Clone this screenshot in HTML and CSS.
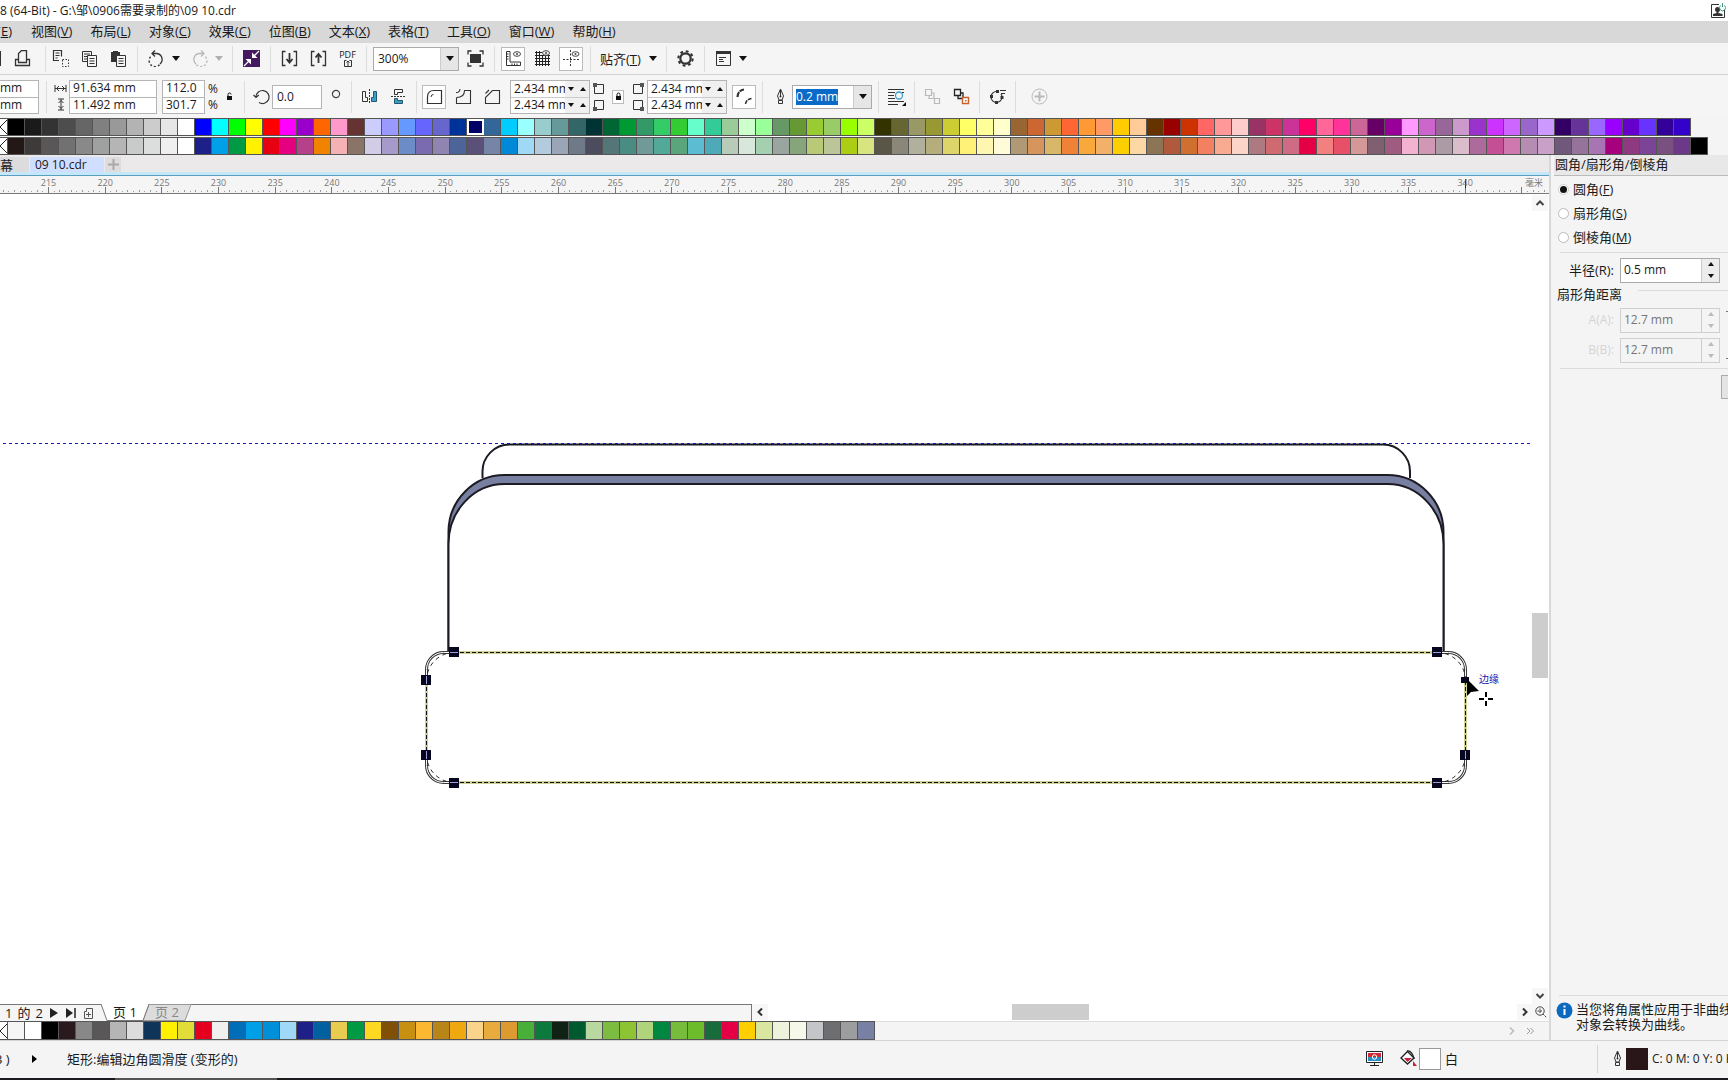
FILE: index.html
```html
<!DOCTYPE html>
<html lang="zh-CN">
<head>
<meta charset="utf-8">
<title>09 10.cdr</title>
<link rel="stylesheet" href="styles.css">
</head>
<body>
<div class="app">
  <header class="titlebar">
    <span>8 (64-Bit) - G:\邹\0906需要录制的\09 10.cdr</span>
    <button class="account" aria-label="账户"><svg width="16" height="16" viewBox="0 0 16 16"><path d="M9 1.500H1.500V14.500H14.500V7" fill="none" stroke="#333"/><circle cx="7.500" cy="6.500" r="2.500" fill="#333"/><path d="M6.500 8h2v2l4 1v2H3v-2l3.500-1z" fill="#333"/><path d="M10.500 2.500a3 3 0 1 0 4 0M12.500 0v4" fill="none" stroke="#3a9a78"/></svg></button>
  </header>
  <nav class="menubar">
    <button class="cut-menu">(<u>E</u>)</button><button>视图(<u>V</u>)</button><button>布局(<u>L</u>)</button><button>对象(<u>C</u>)</button><button>效果(<u>C</u>)</button><button>位图(<u>B</u>)</button><button>文本(<u>X</u>)</button><button>表格(<u>T</u>)</button><button>工具(<u>O</u>)</button><button>窗口(<u>W</u>)</button><button>帮助(<u>H</u>)</button>
  </nav>

  <div class="toolbar">
    <button class="tool tool-cut" aria-label="保存"><svg width="17" height="17"><path d="M1 1h15v15H1z" fill="#333"/></svg></button>
    <button class="tool" aria-label="打印"><svg width="17" height="17"><path d="M4.500 9.500H1.500V15.500H15.500V9.500H12.500M4.500 12.500H12.500V.500H7.500L4.500 3.500z" fill="none" stroke="#333" stroke-width="1.300"/></svg></button>
    <span class="sep sep-wide"></span>
    <button class="tool" aria-label="剪切"><svg width="17" height="17"><path d="M7 10.500H1.500V.500H9.500V6.500M3.500 3h4M3.500 5.500h4M3.500 8h2" fill="none" stroke="#333" stroke-width="1.200"/><path d="M10.500 9.500h6v7h-6z" fill="none" stroke="#333" stroke-dasharray="1.500 1.500"/></svg></button>
    <button class="tool" aria-label="复制"><svg width="17" height="17"><path d="M6.500 11.500H1.500V1.500H10.500V5M3 4h6M3 6.500h4M3 9h3M6.500 5.500H15.500V16.500H6.500zM8.500 8.500h5M8.500 11h5M8.500 13.500h5" fill="none" stroke="#333"/></svg></button>
    <button class="tool" aria-label="粘贴"><svg width="17" height="17"><path d="M1 2h2V1h5v1h2v10H1z" fill="#333"/><path d="M6.500 5.500H15.500V16.500H6.500z" fill="#f5f5f5" stroke="#333"/><path d="M8.500 8.500h5M8.500 11h5M8.500 13.500h5" stroke="#333"/></svg></button>
    <span class="sep"></span>
    <button class="tool" aria-label="撤消"><svg width="17" height="17"><path d="M7 .500 4 3.500 7 6.500M4.500 3.500H9a6 6 0 0 1 3 10.500" fill="none" stroke="#333" stroke-width="1.300"/><path d="M11.500 14.800A6 6 0 0 1 2.800 6.500" fill="none" stroke="#333" stroke-width="1.400" stroke-dasharray="2 2"/></svg></button>
    <button class="drop" aria-label="撤消列表"><i class="tri"></i></button>
    <button class="tool faded" aria-label="重做" disabled><svg width="17" height="17"><path d="M10 .500 13 3.500 10 6.500M12.500 3.500H8a6 6 0 0 0-3 10.500" fill="none" stroke="#333" stroke-width="1.300"/><path d="M5.500 14.800A6 6 0 0 0 14.200 6.500" fill="none" stroke="#333" stroke-width="1.400" stroke-dasharray="2 2"/></svg></button>
    <button class="drop faded" aria-label="重做列表" disabled><i class="tri"></i></button>
    <span class="sep"></span>
    <button class="tool" aria-label="搜索内容"><svg width="17" height="17"><path d="M0 0h17v17H0z" fill="#45195f"/><path d="M16 1 10 7M1 16l6-6" stroke="#fff" stroke-width="1.300"/><path d="M9 2.500V8h5.500zM8 14.500V9H2.500z" fill="#fff"/></svg></button>
    <span class="sep"></span>
    <button class="tool" aria-label="导入"><svg width="17" height="17"><path d="M4.500 1.500H1.500V15.500H4.500M12.500 1.500H15.500V15.500H12.500" fill="none" stroke="#333" stroke-width="1.300"/><path d="M8.500 3v9M5.500 9l3 3.500 3-3.500" fill="none" stroke="#333" stroke-width="1.800"/></svg></button>
    <button class="tool" aria-label="导出"><svg width="17" height="17"><path d="M4.500 1.500H1.500V15.500H4.500M12.500 1.500H15.500V15.500H12.500" fill="none" stroke="#333" stroke-width="1.300"/><path d="M8.500 13V4M5.500 7.500l3-3.500 3 3.500" fill="none" stroke="#333" stroke-width="1.800"/></svg></button>
    <button class="tool pdf" aria-label="发布为 PDF"><span>PDF</span><svg width="8" height="8"><path d="M2.500 1.500h-2v6h7v-6h-2M4 7V2M2.500 3.500 4 2l1.500 1.500" fill="none" stroke="#333"/></svg></button>
    <span class="sep"></span>
    <div class="combo zoom-combo"><input type="text" value="300%" aria-label="缩放级别"><button aria-label="缩放列表"><i class="tri"></i></button></div>
    <button class="tool" aria-label="全屏预览"><svg width="17" height="17"><path d="M3 4h11v9H3z" fill="#333"/><path d="M1 4.500V1H4.500M12.500 1H16V4.500M16 12.500V16H12.500M4.500 16H1V12.500" fill="none" stroke="#333" stroke-width="1.300"/></svg></button>
    <span class="sep"></span>
    <button class="tool on" aria-label="显示标尺"><svg width="17" height="17"><path d="M1.500 1.500H5V12H15.500V15.500H1.500zM1.500 4h2M1.500 6.500h2M1.500 9h2M7 15.500v-2M9.500 15.500v-2M12 15.500v-2" fill="none" stroke="#333"/><ellipse cx="12" cy="4" rx="3.500" ry="2.300" fill="none" stroke="#444"/><circle cx="12" cy="4" r="1" fill="#444"/></svg></button>
    <button class="tool" aria-label="显示网格"><svg width="17" height="17"><path d="M1 2.500h7M1 5.500h15M1 8.500h15M1 11.500h15M1 14.500h15M2.500 1v15M5.500 1v15M8.500 5v11M11.500 6v10M14.500 6v10" stroke="#222"/><ellipse cx="12" cy="3" rx="3.500" ry="2.300" fill="#f5f5f5" stroke="#444"/><circle cx="12" cy="3" r="1" fill="#444"/></svg></button>
    <button class="tool on" aria-label="显示辅助线"><svg width="17" height="17"><path d="M7.500 0v17M0 9.500h17" stroke="#333" stroke-dasharray="2 1.500"/><ellipse cx="12.500" cy="4" rx="3.500" ry="2.300" fill="#fff" stroke="#444"/><circle cx="12.500" cy="4" r="1" fill="#444"/></svg></button>
    <span class="sep"></span>
    <button class="snap"><span>贴齐(<u>T</u>)</span><i class="tri"></i></button>
    <span class="sep"></span>
    <button class="tool" aria-label="选项"><svg width="17" height="17"><circle cx="8.500" cy="8.500" r="5.200" fill="none" stroke="#333" stroke-width="2.200"/><circle cx="8.500" cy="8.500" r="7.200" fill="none" stroke="#333" stroke-width="2" stroke-dasharray="2.830 2.830"/></svg></button>
    <span class="sep"></span>
    <button class="tool" aria-label="应用程序启动器"><svg width="17" height="17"><path d="M1 1h15v3H1z" fill="#333"/><path d="M1.500 2V15.500H15.500V2M4 7.500h7M4 9.500h4M4 11.500h5" fill="none" stroke="#333"/></svg></button>
    <button class="drop" aria-label="启动器列表"><i class="tri"></i></button>
  </div>

  <div class="propbar">
    <div class="stack pos"><input type="text" value="mm" aria-label="X"><input type="text" value="mm" aria-label="Y"></div>
    <span class="sep"></span>
    <div class="size-icons">
      <svg width="13" height="9"><path d="M1 1v7M12 1v7M1 4.500h11M5 2 2.500 4.500 5 7M8 2l2.500 2.500L8 7" fill="none" stroke="#333"/></svg>
      <svg width="13" height="13"><path d="M4 1h6M4 12h6M7 1v11M4.500 5 7 2.500 9.500 5M4.500 8 7 10.500 9.500 8" fill="none" stroke="#333"/></svg>
    </div>
    <div class="stack size"><input type="text" value="91.634 mm" aria-label="宽度"><input type="text" value="11.492 mm" aria-label="高度"></div>
    <div class="stack scale"><input type="text" value="112.0" aria-label="水平缩放"><input type="text" value="301.7" aria-label="垂直缩放"></div>
    <div class="percent"><span>%</span><span>%</span></div>
    <button class="ratio" aria-label="锁定比率"><svg width="7" height="9"><path d="M1 4h5v4H1z" fill="#111"/><path d="M2 4V2.500a1.500 1.500 0 0 1 3 0" fill="none" stroke="#111"/></svg></button>
    <span class="sep"></span>
    <label class="rotate-label" for="angle" aria-label="旋转角度"><svg width="17" height="17"><path d="M3 9a6.500 6.500 0 1 1 3 5.500M.500 7 3 9.500 5.800 7" fill="none" stroke="#333" stroke-width="1.200"/></svg></label>
    <input class="angle" id="angle" type="text" value="0.0">
    <span class="degree"><svg width="10" height="10"><circle cx="5" cy="5" r="3.600" fill="none" stroke="#444" stroke-width="1.200"/></svg></span>
    <span class="sep"></span>
    <button class="tool" aria-label="水平镜像"><svg width="17" height="17"><path d="M1.500 3.500V13.500H6.500V9.500H4.500V3.500z" fill="none" stroke="#333"/><path d="M15.500 3.500V13.500H10.500V9.500H12.500V3.500z" fill="#39a0c8" stroke="#25566c"/><path d="M8.500 1v15" stroke="#333" stroke-dasharray="2 1"/></svg></button>
    <button class="tool" aria-label="垂直镜像"><svg width="17" height="17"><path d="M4.500 6.500V1.500H12.500V4.500H7.500V6.500z" fill="none" stroke="#333"/><path d="M4.500 10.500V15.500H12.500V12.500H7.500V10.500z" fill="#39a0c8" stroke="#25566c"/><path d="M1 8.500h15" stroke="#333" stroke-dasharray="2 1"/></svg></button>
    <span class="sep"></span>
    <button class="tool on" aria-label="圆角"><svg width="17" height="17"><path d="M1.500 15.500V9Q1.500 2.500 8 2.500H15.500V15.500z" fill="none" stroke="#333" stroke-width="1.200"/><path d="M5 9q0-2.500 2.500-2.500" fill="none" stroke="#333"/></svg></button>
    <button class="tool" aria-label="扇形角"><svg width="17" height="17"><path d="M1.500 9.500V15.500H15.500V2.500H9.500Q9.500 9.500 1.500 9.500M1 4.500Q4.500 5 5 1" fill="none" stroke="#333" stroke-width="1.100"/></svg></button>
    <button class="tool" aria-label="倒棱角"><svg width="17" height="17"><path d="M1.500 9.500V15.500H15.500V2.500H8.500zM1.500 5.500 5 2" fill="none" stroke="#333" stroke-width="1.100"/></svg></button>
    <div class="radii radii-first">
      <div><input type="text" value="2.434 mm" aria-label="左上半径"><button aria-label="减"><i class="tri small"></i></button><button aria-label="增"><i class="tri small up"></i></button></div>
      <div><input type="text" value="2.434 mm" aria-label="左下半径"><button aria-label="减"><i class="tri small"></i></button><button aria-label="增"><i class="tri small up"></i></button></div>
    </div>
    <div class="corners">
      <svg width="13" height="14"><path d="M2.500 2.500h9v9h-9z" fill="none" stroke="#333"/><path d="M1 1h4v4H1z" fill="#555"/></svg>
      <svg width="13" height="14"><path d="M2.500 2.500h9v9h-9z" fill="none" stroke="#333"/><path d="M1 9h4v4H1z" fill="#555"/></svg>
    </div>
    <button class="together" aria-label="同时编辑所有角"><svg width="7" height="9"><path d="M1 4h5v4H1z" fill="#111"/><path d="M2 4V2.500a1.500 1.500 0 0 1 3 0V4" fill="none" stroke="#111"/></svg></button>
    <div class="corners">
      <svg width="13" height="14"><path d="M1.500 2.500h9v9h-9z" fill="none" stroke="#333"/><path d="M8 1h4v4H8z" fill="#555"/></svg>
      <svg width="13" height="14"><path d="M1.500 2.500h9v9h-9z" fill="none" stroke="#333"/><path d="M8 9h4v4H8z" fill="#555"/></svg>
    </div>
    <div class="radii">
      <div><input type="text" value="2.434 mm" aria-label="右上半径"><button aria-label="减"><i class="tri small"></i></button><button aria-label="增"><i class="tri small up"></i></button></div>
      <div><input type="text" value="2.434 mm" aria-label="右下半径"><button aria-label="减"><i class="tri small"></i></button><button aria-label="增"><i class="tri small up"></i></button></div>
    </div>
    <button class="tool on relative-corner" aria-label="相对角缩放"><svg width="17" height="17"><path d="M1.500 9Q2 2.500 8 1.500" fill="none" stroke="#333" stroke-width="2.200" stroke-dasharray="5 1 8"/><path d="M9.500 16Q10 11.500 15.500 10.500" fill="none" stroke="#333" stroke-width="1.500" stroke-dasharray="4 1"/></svg></button>
    <span class="sep"></span>
    <label class="pen" for="outline" aria-label="轮廓宽度"><svg width="9" height="17"><path d="M4.500 1 1.500 8l1.500 4h3l1.500-4zM4.500 2v6M2.500 12.500h4v3h-4z" fill="none" stroke="#333"/><circle cx="4.500" cy="8.500" r="1" fill="#333"/></svg></label>
    <div class="combo outline-combo"><div class="outline-field"><input id="outline" type="text" value="0.2 mm"></div><button aria-label="轮廓宽度列表"><i class="tri"></i></button></div>
    <span class="sep"></span>
    <button class="tool" aria-label="文本换行"><svg width="19" height="19"><path d="M1 2.500h16M1 5.500h7M1 8.500h6M1 11.500h7M1 14.500h16M1 17.500h10M15 5.500h2" stroke="#333"/><circle cx="12" cy="8.500" r="3.500" fill="#f5f5f5" stroke="#3a9fd0" stroke-width="1.300"/><path d="M19 15v4h-4z" fill="#111"/></svg></button>
    <span class="sep"></span>
    <button class="tool faded" aria-label="到图层前面"><svg width="17" height="17"><path d="M1.500 1.500h6v6h-6zM5 7.500v3h5V5H7.500M10.500 10.500h5v5h-5z" fill="none" stroke="#333" stroke-width="1.200"/></svg></button>
    <button class="tool" aria-label="到图层后面"><svg width="17" height="17"><path d="M1.500 1.500h6v6h-6zM5 7.500v3h5V5H7.500" fill="none" stroke="#222" stroke-width="1.300"/><path d="M9.500 9.500h6v6h-6z" fill="#fff" stroke="#c8602c" stroke-width="1.400"/><path d="M12 12h1.500v1.500H12z" fill="#c8602c"/></svg></button>
    <span class="sep"></span>
    <button class="tool" aria-label="转换为曲线"><svg width="17" height="17"><circle cx="7.500" cy="9" r="5.500" fill="none" stroke="#333" stroke-width="1.200"/><path d="M9 1h8v5H9z" fill="#f5f5f5"/><path d="M1 7h3v3H1zM7 2h3v3H7zM11.500 8h3v3h-3zM6 13h3v3H6z" fill="#333"/><path d="M11 2.500h6M12 5.500h4" stroke="#333"/></svg></button>
    <span class="sep"></span>
    <button class="tool faded add" aria-label="自定义"><svg width="17" height="17"><circle cx="8.500" cy="8.500" r="7.500" fill="none" stroke="#333"/><path d="M8.500 3.500v10M3.500 8.500h10" stroke="#333" stroke-width="2"/></svg></button>
  </div>

  <div class="palettes">
    <div class="palette" data-palette="rgb" data-selected="27"></div>
    <div class="palette" data-palette="cmyk"></div>
  </div>

  <div class="workspace">
    <main class="editor">
      <div class="doc-tabs"><button class="welcome">幕</button><button class="doc active">09 10.cdr</button><button class="new-doc" aria-label="新建"><svg width="11" height="11"><path d="M5.500 0v11M0 5.500h11" stroke="#aaa" stroke-width="2"/></svg></button></div>
      <svg class="ruler" aria-hidden="true"></svg>
      <div class="viewport">
        <svg class="page">
          <g transform="translate(0 -194)">
            <path d="M482.500 478V472A27 27 0 0 1 509.500 444.500H1383A27 27 0 0 1 1410 472V478" fill="#fff" stroke="#1c1a22" stroke-width="2"/>
            <path d="M3 443.500H1531" stroke="#1818b0" stroke-dasharray="3 3"/>
            <path d="M448.500 652V532A56 57 0 0 1 504.500 475H1387.500A56 57 0 0 1 1443.500 532V652" fill="#7880a2" stroke="#1c1a22" stroke-width="2"/>
            <path d="M448.500 652V544A56 60 0 0 1 504.500 484H1387.500A56 60 0 0 1 1443.500 544V652" fill="#fff" stroke="#1c1a22" stroke-width="2"/>
            <rect x="426.500" y="652.500" width="1039" height="130" rx="17" fill="#fff" stroke="#3a3a3a" stroke-width="3"/>
            <rect x="426.500" y="652.500" width="1039" height="130" rx="17" fill="none" stroke="#fff"/>
            <path d="M454 652.500H1437M454 782.500H1437M426.500 681V755M1465.500 681V755" stroke="#cfcf98" stroke-width="3"/>
            <path d="M454 652.500H1437M454 782.500H1437M426.500 681V755M1465.500 681V755" stroke="#111" stroke-dasharray="4 2"/>
            <path d="M426.500 681A28 28 0 0 1 454.500 652.500M1437 652.500A28 28 0 0 1 1465.500 681M1465.500 755A28 28 0 0 1 1437 782.500M454.500 782.500A28 28 0 0 1 426.500 755" fill="none" stroke="#222" stroke-dasharray="4 4"/>
            <path d="M449 647h10v10h-10zM1432 647h10v10h-10zM449 778h10v10h-10zM1432 778h10v10h-10zM421 675h10v10h-10zM421 750h10v10h-10zM1460 750h10v10h-10zM1461 677h8v6h-8z" fill="#060620"/>
            <path d="M450 652.500h8M1433 652.500h8M450 782.500h8M1433 782.500h8M426.500 676v8M426.500 751v8M1465.500 751v8" stroke="#a0a0d8"/>
            <path d="M1467 679V696L1471 692 1479 691z" fill="#000"/>
            <path d="M1486 692v5M1486 701v5M1479 699h5M1488 699h5" stroke="#000" stroke-width="2"/>
            <text class="snap-hint" x="1479" y="683">边缘</text>
          </g>
        </svg>
        <div class="vscroll">
          <button aria-label="向上滚动"><svg width="10" height="8"><path d="M1.500 6 5 2.500 8.500 6" fill="none" stroke="#444" stroke-width="2"/></svg></button>
          <span class="before"></span><span class="thumb"></span><span class="after"></span>
          <button aria-label="向下滚动"><svg width="10" height="8"><path d="M1.500 2 5 5.500 8.500 2" fill="none" stroke="#444" stroke-width="2"/></svg></button>
        </div>
      </div>
      <div class="page-row">
        <div class="pages">
          <span class="count"><span>1</span><span>的</span><span>2</span></span>
          <button aria-label="下一页"><svg width="8" height="10"><path d="M0 0 8 5 0 10z" fill="#222"/></svg></button>
          <button aria-label="末页"><svg width="10" height="10"><path d="M0 0 7 5 0 10z" fill="#222"/><path d="M9 0v10" stroke="#222" stroke-width="1.500"/></svg></button>
          <button aria-label="添加页"><svg width="10" height="11"><path d="M3.500 3.500V.500H9.500V10.500H1.500V3.500zM3 6.500h5M5.500 4v5" fill="none" stroke="#555"/></svg></button>
          <button class="page-tab current"><svg viewBox="0 0 48 17"><path d="M0 0 6 16.500H42L48 0" fill="#fff" stroke="#777"/></svg><span>页 1</span></button>
          <button class="page-tab"><svg viewBox="0 0 48 17"><path d="M6 .500H48L42 16.500H0z" fill="#dcdcdc" stroke="#999"/></svg><span>页 2</span></button>
        </div>
        <div class="hscroll">
          <button aria-label="向左滚动"><svg width="8" height="10"><path d="M6 1.500 2.500 5 6 8.500" fill="none" stroke="#333" stroke-width="2"/></svg></button>
          <span class="before"></span><span class="thumb"></span><span class="after"></span>
          <button aria-label="向右滚动"><svg width="8" height="10"><path d="M2 1.500 5.500 5 2 8.500" fill="none" stroke="#333" stroke-width="2"/></svg></button>
          <button aria-label="导航器"><svg width="12" height="12"><circle cx="5" cy="5" r="4.200" fill="none" stroke="#444"/><path d="M8 8l3.500 3.500M5 2.500v5M2.500 5h5" stroke="#444" stroke-dasharray="2 .500"/></svg></button>
        </div>
      </div>
      <div class="doc-palette">
        <div class="palette" data-palette="document"></div>
        <div class="palette-more"><button aria-label="向右滚动调色板"><svg width="8" height="10"><path d="M2 1.500 5.500 5 2 8.500" fill="none" stroke="#bbb" stroke-width="1.500"/></svg></button><button aria-label="展开调色板"><svg width="9" height="10"><path d="M1 2 4 5 1 8M4.500 2 7.500 5 4.500 8" fill="none" stroke="#999"/></svg></button></div>
      </div>
    </main>
    <aside class="docker">
      <h2>圆角/扇形角/倒棱角</h2>
      <div class="docker-body">
        <div class="choices">
          <label><input type="radio" name="corner" checked>圆角(<u>F</u>)</label>
          <label><input type="radio" name="corner">扇形角(<u>S</u>)</label>
          <label><input type="radio" name="corner">倒棱角(<u>M</u>)</label>
        </div>
        <div class="row radius"><label for="radius">半径(R):</label><div class="spin"><input id="radius" type="text" value="0.5 mm"><span class="spin-btns"><button aria-label="增"><i class="tri small up"></i></button><button aria-label="减"><i class="tri small"></i></button></span></div></div>
        <h3><span>扇形角距离</span></h3>
        <div class="row off"><label for="da">A(A):</label><div class="spin"><input id="da" type="text" value="12.7 mm" disabled><span class="spin-btns"><button aria-label="增" disabled><i class="tri small up"></i></button><button aria-label="减" disabled><i class="tri small"></i></button></span></div><span class="link link-top"></span></div>
        <div class="row off"><label for="db">B(B):</label><div class="spin"><input id="db" type="text" value="12.7 mm" disabled><span class="spin-btns"><button aria-label="增" disabled><i class="tri small up"></i></button><button aria-label="减" disabled><i class="tri small"></i></button></span></div><span class="link link-bottom"></span></div>
        <div class="apply-row"><button class="apply" aria-label="应用"></button></div>
      </div>
      <div class="note"><svg width="17" height="17"><circle cx="8.500" cy="8.500" r="8" fill="#0b69c0"/><path d="M7.500 7h2v6h-2zM7.500 3.500h2v2h-2z" fill="#fff"/></svg><p>当您将角属性应用于非曲线<br>对象会转换为曲线。</p></div>
    </aside>
  </div>

  <footer class="status">
    <span class="cut-text">3 )</span>
    <button class="expand" aria-label="展开"><svg width="5" height="8"><path d="M0 0 5 4 0 8z" fill="#000"/></svg></button>
    <span>矩形:编辑边角圆滑度 (变形的)</span>
    <div class="fill-info">
      <svg width="17" height="17"><path d="M.500 1.500h16v11H.500z" fill="#fff" stroke="#222"/><path d="M2 3h13v4H2z" fill="#d02a35"/><path d="M2 7h13v4H2z" fill="#2c8fc4"/><circle cx="8.500" cy="7" r="2.200" fill="none" stroke="#fff"/><path d="M8.500 12.500v3M4 15.500h9" stroke="#222"/></svg>
      <svg class="bucket" width="18" height="17"><path d="M7.500 1.500 14 8 7.500 14 1 8z" fill="#fff" stroke="#222" stroke-width="1.400"/><path d="M4 8h8l-4.500 4z" fill="#c8203c"/><path d="M7 1q5-1 7 8" fill="none" stroke="#222" stroke-width="1.400"/><path d="M13 11l4 5h-4z" fill="#c8203c"/></svg>
      <span class="swatch white"></span><span>白</span>
    </div>
    <div class="outline-info">
      <svg width="9" height="17"><path d="M4.500 1 1.500 8l1.500 4h3l1.500-4zM4.500 2v6M2.500 12.500h4v3h-4z" fill="none" stroke="#333"/><circle cx="4.500" cy="8.500" r="1" fill="#333"/></svg>
      <span class="swatch dark"></span><span class="ink">C: 0 M: 0 Y: 0 K: 100</span>
    </div>
  </footer>
  <div class="taskbar"><span></span></div>
</div>
<script src="script.js"></script>
</body>
</html>
```
FILE: styles.css
```css
* { box-sizing: border-box; }
body { margin: 0; background: #f4f4f4; color: #1a1a1a; font: 12px/16px "Open Sans", "Noto Sans CJK SC", sans-serif; }
button, input { margin: 0; padding: 0; border: 0; background: none; color: inherit; font: inherit; border-radius: 0; min-width: 0; }
input { outline: 0; }
svg { display: block; flex: none; }
u { text-underline-offset: 1px; }

.app { display: flex; flex-direction: column; min-height: 100vh; overflow: hidden; white-space: nowrap; }

.titlebar { display: flex; align-items: center; justify-content: space-between; height: 21px; background: #fff; }
.account { padding-right: 2px; }
.menubar { display: flex; gap: 19px; height: 22px; padding-bottom: 2px; background: #d8d8d8; font-size: 13px; }
.menubar button + button { margin-right: -1px; }
.cut-menu { width: 12px; display: flex; justify-content: flex-end; align-items: center; }

.toolbar, .propbar { display: flex; align-items: center; background: #f5f5f5; }
.toolbar { height: 32px; border-bottom: 1px solid #d2d2d2; }
.propbar { height: 43px; }
.sep { flex: none; width: 1px; height: 26px; margin: 0 4px; background: #dcdcdc; }
.sep-wide { margin-left: 8px; margin-right: 0; }
.propbar .sep { height: 32px; margin: 0 3px; }
.tool { flex: none; display: flex; align-items: center; justify-content: center; width: 29px; height: 24px; }
.tool.on { width: 24px; margin: 0 3px 0 2px; background: #fff; border: 1px solid #bbb; }
.tool-cut { margin-left: -21px; }
.drop { display: flex; align-items: center; justify-content: center; width: 14px; height: 24px; padding-right: 4px; }
.faded { opacity: .3; }
.pdf { flex-direction: column; font-size: 9px; line-height: 9px; }
.tri { display: block; width: 0; height: 0; border: 4px solid transparent; border-top: 5px solid #111; border-bottom: 0; }
.tri.small { border-width: 3px; border-top-width: 4px; border-bottom-width: 0; }
.tri.up { transform: rotate(180deg); }

.combo { flex: none; display: flex; background: #fff; border: 1px solid #aaa; height: 24px; }
.combo input { flex: 1; width: 100%; padding-left: 4px; }
.combo button { flex: none; display: flex; align-items: center; justify-content: center; width: 18px; background: #e6e6e6; border-left: 1px solid #ccc; }
.zoom-combo { width: 86px; margin: 0 2px; }
.snap { display: flex; align-items: center; justify-content: space-between; width: 67px; height: 24px; padding: 0 5px; font-size: 13px; }

.stack { flex: none; display: grid; grid-template-rows: 16px 16px; background: #fff; border: 1px solid #b4b4b4; }
.stack input { width: 100%; height: 15px; padding-left: 3px; }
.stack input + input { border-top: 1px solid #b4b4b4; height: 16px; }
.pos { width: 39px; margin-right: 4px; border-left: 0; }
.pos input { padding-left: 0; }
.size-icons { display: grid; grid-template-rows: 16px 16px; align-items: center; width: 13px; margin: 0 2px 0 4px; }
.size { width: 88px; margin-right: 5px; }
.scale { width: 43px; margin-right: 3px; }
.percent { display: grid; width: 10px; }
.ratio { display: flex; justify-content: center; width: 23px; }
.rotate-label { display: flex; width: 24px; padding-left: 5px; }
.angle { width: 50px; height: 24px; padding-left: 4px; background: #fff; border: 1px solid #b4b4b4; }
.degree { display: flex; justify-content: center; width: 26px; padding: 0 0 6px 2px; }
.radii { flex: none; width: 80px; border: 1px solid #b4b4b4; background: #fff; }
.radii-first { margin-left: 3px; }
.radii > div { display: flex; height: 16px; }
.radii > div + div { border-top: 1px solid #ccc; }
.radii input { width: 54px; padding-left: 3px; }
.radii button { flex: 1; display: flex; align-items: center; justify-content: center; background: #f0f0f0; }
.corners { display: grid; gap: 2px; margin: 0 2px; }
.together { display: flex; align-items: center; justify-content: center; width: 12px; height: 14px; margin: 0 6px 0 5px; background: #fff; border: 1px solid #bbb; }
.propbar .relative-corner { margin-left: 5px; }
.pen { display: flex; justify-content: center; width: 26px; padding-left: 2px; }
.outline-combo { width: 80px; margin-right: 3px; }
.outline-field { flex: 1; display: flex; align-items: center; padding-left: 3px; }
.outline-field input { flex: none; width: 42px; padding: 0; background: #0a6ac8; color: #fff; line-height: 16px; }
.add { margin-left: 6px; }

.palettes { display: grid; gap: 1px; }
.palette { display: flex; height: 18px; width: max-content; border: solid #555; border-width: 1px 0; overflow: hidden; }
.palette button { flex: none; width: 17px; border-right: 1px solid #555; }
.palette button.selected { border: 1px solid #fff; outline: 1px solid #fff; outline-offset: -2px; }
.palette .none { width: 8px; background: #fff; }

.workspace { flex: 1; display: flex; min-height: 0; }
.editor { flex: 1; min-width: 0; display: flex; flex-direction: column; }
.doc-tabs { display: flex; gap: 1px; height: 20px; padding-top: 2px; background: #ebe9e9; border-bottom: 3px solid #c4e8fa; }
.doc-tabs button { display: flex; align-items: center; }
.doc-tabs .welcome { width: 29px; background: #dcdcdc; font-size: 13px; }
.doc-tabs .doc { width: 74px; padding-left: 5px; background: #d0deff; }
.doc-tabs .new-doc { justify-content: center; width: 16px; background: #dedcdc; }
.ruler { width: 100%; height: 19px; background: #f5f5f5; border-top: 1px solid #5a9fc0; border-bottom: 1px solid #777; }
.ruler text { font-size: 9px; fill: #777; text-anchor: middle; }
.viewport { flex: 1; display: flex; background: #fff; min-height: 0; }
.page { flex: 1; min-width: 0; height: auto; }
.snap-hint { font-size: 10px; fill: #1414b4; }
.vscroll { display: flex; flex-direction: column; width: 16px; margin-right: 1px; padding-top: 1px; }
.vscroll button, .hscroll button { display: flex; align-items: center; justify-content: center; width: 16px; height: 16px; background: #f7f7f7; }
.thumb { background: #cdcdcd; }
.vscroll .before { flex: 402; }
.vscroll .thumb { flex: 65; }
.vscroll .after { flex: 310; }
.page-row { display: flex; height: 17px; background: #fff; }
.pages { display: flex; align-items: center; width: 752px; max-width: 60%; background: #f5f5f5; border: solid #777; border-width: 1px 1px 0 0; flex: none; }
.pages .count { display: flex; gap: 5px; width: 45px; padding-left: 5px; font-size: 13px; }
.pages > button { display: flex; align-items: center; justify-content: center; width: 17px; height: 16px; }
.pages > .page-tab { position: relative; width: 48px; margin-top: -1px; height: 17px; }
.pages > .page-tab.current { margin: -1px -6px 0 5px; z-index: 1; }
.page-tab svg { position: absolute; inset: 0; width: 100%; height: 100%; }
.page-tab span { position: relative; font-size: 13px; line-height: 14px; padding-bottom: 2px; }
.page-tab:not(.current) { color: #888; }
.hscroll { flex: 1; display: flex; }
.hscroll span { margin-bottom: 1px; }
.hscroll .before { flex: 243; }
.hscroll .thumb { flex: 77; }
.hscroll .after { flex: 427; }
.doc-palette { display: flex; justify-content: space-between; height: 19px; background: #f4f4f4; }
.doc-palette .palette { height: 19px; }
.palette-more { display: flex; align-items: center; gap: 10px; padding-right: 14px; border-top: 1px solid #ddd; flex: 1; justify-content: flex-end; }

.docker { flex: none; display: flex; flex-direction: column; width: 179px; padding-left: 3px; background: #f4f4f4; border-left: 2px solid #d8d8d8; overflow: hidden; font-size: 13px; }
.docker h2 { margin: 0; height: 21px; padding-left: 1px; background: #e9e8e8; border-bottom: 1px solid #bbb; font: inherit; line-height: 19px; }
.docker-body { flex: 1; padding-left: 3px; }
.choices { display: grid; gap: 8px; padding: 5px 0 7px; margin-left: 3px; border-bottom: 1px solid #dcdcdc; }
.choices label { display: flex; align-items: center; height: 16px; margin-left: -2px; }
.choices input { appearance: none; width: 11px; height: 11px; margin-right: 4px; border: 1px solid #bbb; border-radius: 50%; background: #fff; }
.choices input:checked { border: 2px solid #fff; background: #111; outline: 1px solid #ccc; outline-offset: -1px; }
.row { display: flex; align-items: center; height: 30px; }
.row.radius { height: 34px; }
.row label { flex: none; width: 59px; padding-right: 2px; text-align: right; }
.spin { flex: none; display: flex; width: 100px; height: 25px; margin-left: 4px; background: #fff; border: 1px solid #aaa; font-size: 12px; }
.spin input { flex: 1; width: 0; padding-left: 3px; }
.spin-btns { display: grid; width: 18px; background: #ececec; border-left: 1px solid #ccc; }
.spin-btns button { display: flex; align-items: center; justify-content: center; }
.docker h3 { display: flex; margin: 0; padding-bottom: 3px; font: inherit; line-height: 15px; }
.docker h3::after { content: ""; flex: 1; height: 1px; margin: 3px 0 0 16px; background: #dcdcdc; }
.row.off label { color: #d4d4d4; font-size: 12px; }
.row.off .spin { background: #f4f4f4; border-color: #d0d0d0; color: #777; }
.row.off .spin-btns { background: none; }
.row.off .tri { opacity: .25; }
.link { width: 8px; height: 18px; margin-left: 6px; flex: none; }
.link-top { border-top: 1px solid #777; }
.link-bottom { border-bottom: 1px solid #777; }
.apply-row { display: flex; margin: 3px 0 0 3px; padding-top: 6px; border-top: 1px solid #dcdcdc; }
.apply { flex: none; width: 80px; height: 24px; margin-left: 161px; background: #e4e4e4; border: 1px solid #aaa; }
.note { display: flex; gap: 3px; margin-left: 5px; height: 45px; padding-top: 6px; border-top: 1px solid #dcdcdc; }
.note svg { margin-left: -3px; }
.note p { margin: 0; line-height: 15px; }

.status { display: flex; align-items: center; height: 38px; padding-bottom: 2px; background: #f4f4f4; border-top: 1px solid #d4d4d4; font-size: 13px; }
.cut-text { width: 32px; margin-left: -5px; }
.expand { margin: 0 28px 0 5px; width: 7px; }
.fill-info { display: flex; align-items: center; margin-left: auto; width: 231px; }
.fill-info .bucket { margin: 0 1px 0 17px; }
.swatch { width: 22px; height: 22px; margin-right: 4px; flex: none; }
.white { background: #fff; border: 1px solid #999; }
.dark { background: #281618; margin-left: 4px; }
.outline-info { display: flex; align-items: center; width: 131px; height: 28px; padding-left: 15px; border-left: 1px solid #d4d4d4; overflow: hidden; }
.ink { font-size: 12px; }
.taskbar { height: 2px; padding-left: 115px; background: #1c1a1e; }
.taskbar span { display: block; width: 162px; height: 2px; background: #555; }
```
FILE: script.js
```js
const palettes = {
  rgb: `000000 1a1a1a 333333 4d4d4d 666666 808080 999999 b3b3b3 cccccc e6e6e6 ffffff
    0000ff 00ffff 00ff00 ffff00 ff0000 ff00ff 9900cc ff6600 ff99cc 663333
    ccccff 9999ff 6699ff 6666ff 6666cc 003399 000066 336699 00ccff 99ffff
    99cccc 669999 336666 003333 006633 009933 339966 33cc66 33cc33 66ffcc
    33cc99 99cc99 ccffcc 99ff99 669966 669933 99cc33 99cc66 99ff00 ccff66
    333300 666633 999966 999933 cccc33 ffff66 ffff99 ffffcc 996633 cc6633
    cc9933 ff6633 ff9933 ff9966 ffcc00 ffcc99 663300 990000 cc3300 ff6666
    ff9999 ffcccc 993366 cc3366 cc3399 ff0066 ff6699 ff3399 cc6699 660066
    990099 ff99ff cc66cc 996699 cc99cc 9933cc cc33ff cc66ff 9966cc cc99ff
    330066 663399 9966ff 9900ff 6600cc 6633ff 330099 3300cc`,
  cmyk: `231815 3e3a39 595757 727171 898989 9fa0a0 b5b5b6 c9caca dcdddd efefef ffffff
    1d2088 00a0e9 009944 fff100 e60012 e4007f b4418a f08300 f5b2b6 8a7468
    d3cce6 a59aca 6c8cc7 7a6bb0 9085b0 4c6497 5b5078 7684a8 0089d6 9fd9f6
    b3cbdc 9aa6b8 6f7987 4c4c5e 557678 4a8c82 709a98 53a998 5aa57b 5bbcd2
    4eaab8 b8cbb8 d7e8db a5d0b0 9aa5a0 87a57a b8c978 bcc598 abcd14 d7e480
    595647 8a8678 b0b09c b5ae7c ddd56a fff178 fff7b0 fffad8 b09a76 d6955d
    d8b868 f08238 f9a83c f2b068 fccf00 fdd8a5 8c7555 b0593c d07030 f38060
    f8ab90 fcd5c8 ac7a80 cf6b70 cf6b85 e50045 f28080 e85068 d59898 806070
    a05c80 f3b3d0 d098b5 ac9aa5 dbbcca ad6b9c c54f94 cf78b0 b58db3 c8a0c8
    70587a 96739a a874b4 a6007f 8f3a80 7b4496 7a5080 6c3888 000000`,
  document: `f5f5f5 ffffff 000000 2b1a1d 888888 595757 b5b5b6 dcdcdc 0f3459 fff100
    e0dc38 e60020 f0f0f0 006db8 00a0e9 0090d9 a0d8f8 1d2088 0060a0 e8cc50
    009944 fcd820 805008 c89010 fcb830 b88518 f0a810 fbd48c e8ac3c dc9a30
    48b038 0c7a3c 0f2214 005a30 b8d8a0 7cbc40 8cc434 b0d47c 008840 78bc3c
    6cbc2c 186c3c e50045 ffcf00 d8e6a0 ecf2dc f6f9ea c4c5c8 6e6e70 9c9d9f 7880a4`
};

document.querySelectorAll("[data-palette]").forEach(row => {
  const none = document.createElement("button");
  none.className = "none";
  none.setAttribute("aria-label", "无");
  none.innerHTML = '<svg width="7" height="16"><path d="M7 1 0 8 7 15" fill="none" stroke="#222"/></svg>';
  row.append(none);
  palettes[row.dataset.palette].trim().split(/\s+/).forEach((hex, i) => {
    const cell = document.createElement("button");
    cell.style.background = "#" + hex;
    cell.setAttribute("aria-label", "#" + hex);
    if (String(i) === row.dataset.selected) cell.className = "selected";
    row.append(cell);
  });
});

// Horizontal ruler in millimetres: a label every 5 mm, a tick every half.
const ruler = document.querySelector(".ruler");
const originX = 48.5, step = 170 / 3;
let marks = "", dots = "", labels = "";
for (let i = -1; i <= 26; i++) {
  const x = originX + i * step;
  if (i >= 0) marks += `M${Math.floor(x)}.5 11v6`;
  if (i >= 0 && i < 26) labels += `<text x="${x}" y="10">${215 + i * 5}</text>`;
  for (let k = 1; k < 10; k++) {
    const dx = Math.floor(x + k * step / 10);
    if (dx < 1545) dots += `M${dx}.5 ${k % 2 ? 15 : 14}v${k % 2 ? 1 : 2}`;
  }
}
ruler.innerHTML = `<path d="${marks}" stroke="#777"/><path d="${dots}" stroke="#999"/><path d="M1465.5 3v9" stroke="#222"/>${labels}<text x="1534" y="10">毫米</text>`;
```
